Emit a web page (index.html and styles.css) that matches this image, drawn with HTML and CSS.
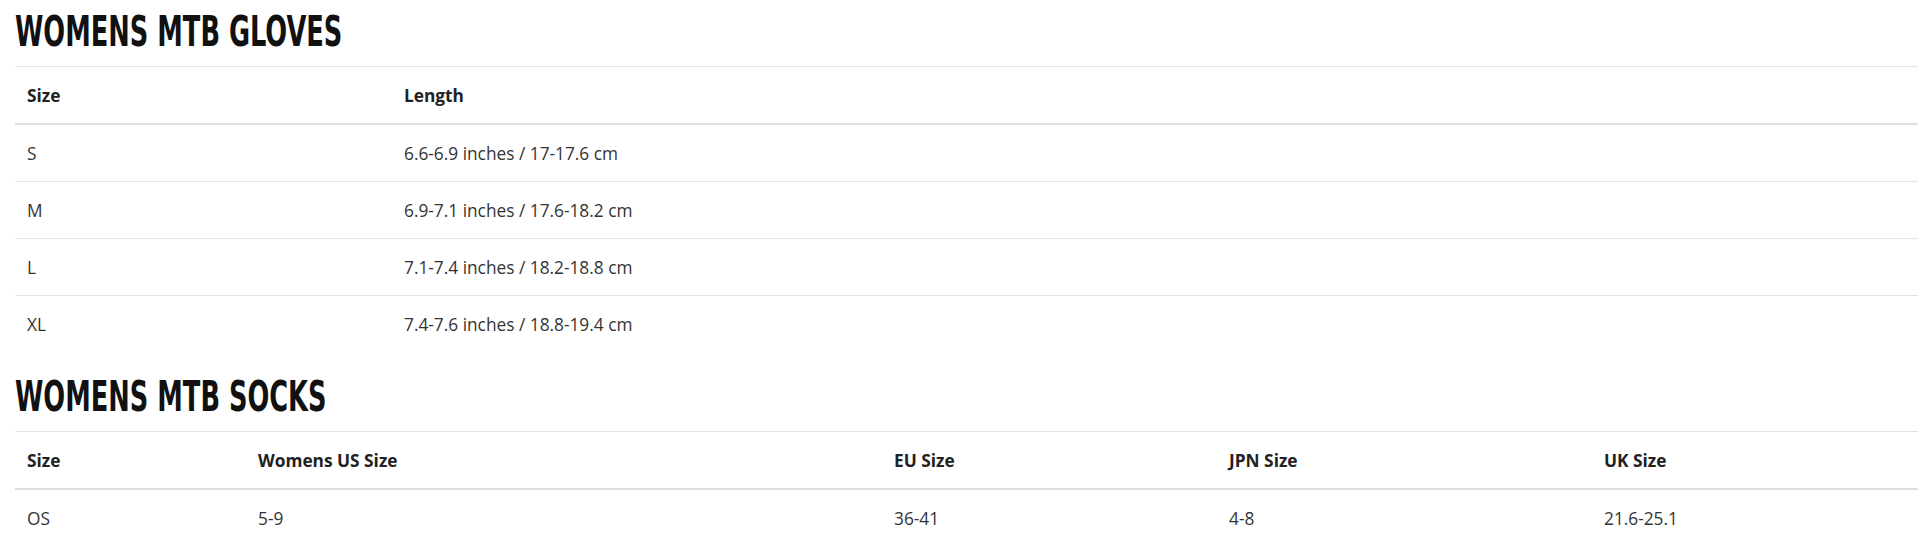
FILE: index.html
```html
<!DOCTYPE html>
<html lang="en">
<head>
<meta charset="utf-8">
<title>Size charts</title>
<link rel="stylesheet" href="styles.css">
</head>
<body>
<main class="page">
  <section class="chart">
    <h2 class="chart-title"><span>WOMENS MTB GLOVES</span></h2>
    <table class="size-table gloves">
      <thead>
        <tr><th class="c-size">Size</th><th>Length</th></tr>
      </thead>
      <tbody>
        <tr><td>S</td><td>6.6-6.9 inches / 17-17.6 cm</td></tr>
        <tr><td>M</td><td>6.9-7.1 inches / 17.6-18.2 cm</td></tr>
        <tr><td>L</td><td>7.1-7.4 inches / 18.2-18.8 cm</td></tr>
        <tr><td>XL</td><td>7.4-7.6 inches / 18.8-19.4 cm</td></tr>
      </tbody>
    </table>
  </section>
  <section class="chart socks-chart">
    <h2 class="chart-title"><span>WOMENS MTB SOCKS</span></h2>
    <table class="size-table socks">
      <thead>
        <tr>
          <th class="s1">Size</th>
          <th class="s2">Womens US Size</th>
          <th class="s3">EU Size</th>
          <th class="s4">JPN Size</th>
          <th>UK Size</th>
        </tr>
      </thead>
      <tbody>
        <tr><td>OS</td><td>5-9</td><td>36-41</td><td>4-8</td><td>21.6-25.1</td></tr>
      </tbody>
    </table>
  </section>
</main>
</body>
</html>
```

FILE: styles.css
```css
html, body {
  margin: 0;
  padding: 0;
  background: #ffffff;
}

body {
  font-family: "Open Sans", "Noto Sans", sans-serif;
  color: #333333;
}

.page {
  padding: 11px 0 0 15px;
  width: 1903px;
}

.chart-title {
  margin: 0 0 13px 0;
  height: 42px;
  font-family: "DejaVu Sans Condensed", "DejaVu Sans", sans-serif;
  font-weight: 700;
  font-size: 42px;
  line-height: 42px;
  color: #111111;
  white-space: nowrap;
}

.chart-title span {
  display: inline-block;
  transform: scaleX(0.68);
  transform-origin: left center;
}

.socks-chart {
  margin-top: 24px;
}

.size-table {
  width: 100%;
  border-collapse: collapse;
  table-layout: fixed;
  font-size: 17.3px;
}

.size-table thead tr {
  border-top: 1px solid #e3e3e3;
  border-bottom: 2px solid #dedede;
}

.size-table th {
  text-align: left;
  font-weight: 700;
  color: #222222;
  height: 56px;
  padding: 0 12px;
  vertical-align: middle;
}

.size-table td {
  height: 56px;
  padding: 0 12px;
  vertical-align: middle;
  color: #333333;
}

.size-table tbody tr + tr {
  border-top: 1px solid #e3e3e3;
}

.gloves .c-size { width: 353px; }

.socks .s1 { width: 207px; }
.socks .s2 { width: 612px; }
.socks .s3 { width: 311px; }
.socks .s4 { width: 351px; }
```
